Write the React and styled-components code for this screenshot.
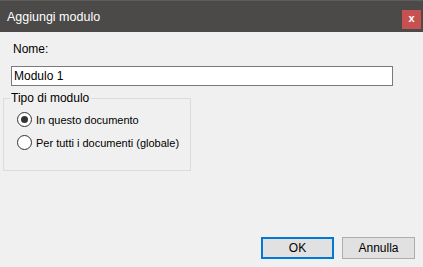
import React from 'react';
import styled, { createGlobalStyle } from 'styled-components';

const GlobalStyle = createGlobalStyle`
  html, body {
    margin: 0;
    padding: 0;
    background: #f0f0f0;
  }
  body {
    font-family: "Liberation Sans", Arial, sans-serif;
    font-size: 12px;
    color: #000;
  }
`;

const Window = styled.div`
  width: 423px;
  height: 267px;
  display: flex;
  flex-direction: column;
  background: #f0f0f0;
  overflow: hidden;
`;

const TitleBar = styled.div`
  height: 32px;
  box-sizing: border-box;
  border-top: 1px solid #5e5d5b;
  background: #4b4a48;
  display: flex;
  align-items: center;
  justify-content: space-between;
  padding: 0 2px 0 7px;
`;

const Title = styled.div`
  color: #fff;
  font-size: 12.5px;
`;

const CloseButton = styled.div`
  width: 19px;
  height: 19px;
  margin-top: 5px;
  background: #c75050;
  color: #fff;
  font-weight: bold;
  font-size: 11px;
  line-height: 17px;
  text-align: center;
`;

const Content = styled.div`
  flex: 1;
  display: flex;
  flex-direction: column;
  padding: 10px 8px 8px 3px;
`;

const Label = styled.div`
  margin-left: 10px;
  line-height: 15px;
`;

const TextInput = styled.input`
  margin: 9px 0 0 8px;
  width: 382px;
  height: 20px;
  box-sizing: border-box;
  border: 1px solid #7a7a7a;
  padding: 0 2px;
  font: inherit;
  outline: none;
  background: #fff;
`;

const Group = styled.fieldset`
  margin: 5px 0 0 0;
  width: 188px;
  min-width: 0;
  height: 80px;
  box-sizing: border-box;
  border: 1px solid #dcdcdc;
  padding: 6px 0 0 13px;
  display: flex;
  flex-direction: column;
  gap: 8px;
`;

const Legend = styled.legend`
  padding: 0 1px;
  margin-left: -7px;
  line-height: 15px;
`;

const RadioRow = styled.label`
  display: flex;
  align-items: center;
  gap: 4px;
  height: 15px;
  font-size: 11px;
  white-space: nowrap;
`;

const RadioCircle = styled.span`
  flex: none;
  width: 13px;
  height: 13px;
  border-radius: 50%;
  border: 1px solid #333;
  background: #fff;
  display: flex;
  align-items: center;
  justify-content: center;
  &::after {
    content: '';
    width: 7px;
    height: 7px;
    border-radius: 50%;
    background: ${p => (p.$checked ? '#333' : 'transparent')};
  }
`;

const Spacer = styled.div`
  flex: 1;
`;

const ButtonRow = styled.div`
  display: flex;
  justify-content: flex-end;
  gap: 8px;
`;

const Button = styled.button`
  width: 73px;
  height: 22px;
  box-sizing: border-box;
  background: #e1e1e1;
  border: ${p => (p.$default ? '2px solid #0078d7' : '1px solid #adadad')};
  font: inherit;
  color: #000;
  padding: 0;
`;

const App = () => {
  return (
    <>
      <GlobalStyle />
      <Window>
        <TitleBar>
          <Title>Aggiungi modulo</Title>
          <CloseButton>x</CloseButton>
        </TitleBar>
        <Content>
          <Label>Nome:</Label>
          <TextInput defaultValue="Modulo 1" />
          <Group>
            <Legend>Tipo di modulo</Legend>
            <RadioRow>
              <RadioCircle $checked />
              In questo documento
            </RadioRow>
            <RadioRow>
              <RadioCircle />
              Per tutti i documenti (globale)
            </RadioRow>
          </Group>
          <Spacer />
          <ButtonRow>
            <Button $default>OK</Button>
            <Button>Annulla</Button>
          </ButtonRow>
        </Content>
      </Window>
    </>
  );
};

export default App;
